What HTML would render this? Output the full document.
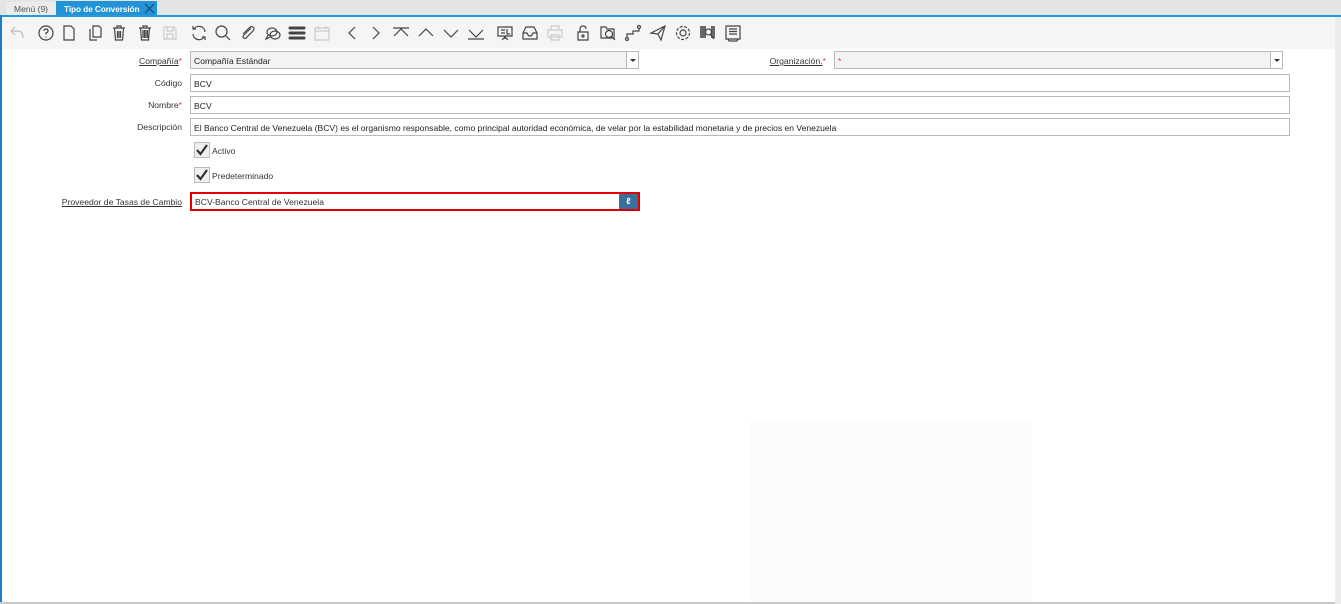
<!DOCTYPE html>
<html><head><meta charset="utf-8"><style>
*{margin:0;padding:0;box-sizing:border-box}
body{width:1341px;height:604px;background:#fff;font-family:"Liberation Sans",sans-serif;position:relative;overflow:hidden;color:#333}
.abs{position:absolute}
.tabbar{left:0;top:0;width:1341px;height:16px;background:#e4e4e4}
.tab1{left:6px;top:2px;width:50px;height:14px;background:#ececec;font-size:8.5px;color:#555;padding:2px 0 0 8px}
.tab2{left:56px;top:1px;width:101px;height:15px;background:#2193d6;color:#fff;font-size:8.3px;font-weight:bold;padding:3px 0 0 8px;letter-spacing:-0.1px}
.bline{left:0;top:15px;width:1341px;height:2px;background:#2a97d8}
.tb{left:2px;top:17px;width:1333px;height:32px;background:#f5f5f5}
.ledge{left:0;top:15px;width:2px;height:589px;background:#1a7fc7}
.rs{left:1335px;top:17px;width:6px;height:587px;background:#ececec}
.bot{left:0;top:602px;width:1335px;height:2px;background:#c8c8c8}
.lbl{font-size:8.6px;text-align:right;width:180px;left:2px;color:#333}
.req{color:#d33}
.fld{border:1px solid #b9b9b9;height:18px;font-size:8.6px;padding:4px 0 0 3px;background:#fff;color:#222;white-space:nowrap}
.grey{background:#f3f3f3}
.dd{position:absolute;right:0;top:0;width:12px;height:16px;border-left:1px solid #b9b9b9;background:#fff}
.dd:after{content:"";position:absolute;left:3px;top:7px;border-left:3px solid transparent;border-right:3px solid transparent;border-top:3px solid #333}
.cb{width:16px;height:16px;border:1px solid #bbb;background:#f0f0f0}
svg.i{position:absolute;top:24px;width:18px;height:18px;fill:none;stroke:#444;stroke-width:1.2}
</style></head><body>
<div class="abs tabbar"></div>
<div class="abs tab1">Menú (9)</div>
<div class="abs tab2">Tipo de Conversión</div>
<svg class="abs" style="left:144px;top:3px" width="11" height="11"><path d="M1 1L10 10M10 1L1 10" stroke="#1a4a6a" stroke-width="1.2"/></svg>
<div class="abs bline"></div>
<div class="abs tb"></div>
<div class="abs ledge"></div>
<div class="abs rs"></div>
<div class="abs bot"></div>

<svg class="i" style="left:8px" viewBox="0 0 18 18"><path d="M3 7L7 3M3 7L7 11M3 7H10Q15 7 15 14" stroke="#bbb"/></svg>
<svg class="i" style="left:37px" viewBox="0 0 18 18"><circle cx="9" cy="9" r="7"/><path d="M7 7Q7 5 9 5Q11 5 11 7Q11 8.5 9 9V10.5M9 12.5V13.5"/></svg>
<svg class="i" style="left:60px" viewBox="0 0 18 18"><path d="M4 2H11L14 5V16H4Z"/></svg>
<svg class="i" style="left:86px" viewBox="0 0 18 18"><path d="M7 2H13L15 4V13H7ZM4 5V16H11"/></svg>
<svg class="i" style="left:110px" viewBox="0 0 18 18"><path d="M3 4H15M7 4V2H11V4M4.5 4L5.5 16H12.5L13.5 4M7.5 7V14M9 7V14M10.5 7V14"/></svg>
<svg class="i" style="left:136px" viewBox="0 0 18 18"><path d="M3 4H15M7 4V2H11V4M4.5 4L5.5 16H12.5L13.5 4M7 6V14M8.5 6V14M10 6V14M11.5 6V14"/></svg>
<svg class="i" style="left:161px" viewBox="0 0 18 18"><path d="M3 3H13L15 5V15H3ZM6 3V7H12V3M6 15V10H12V15" stroke="#ccc"/></svg>
<svg class="i" style="left:190px" viewBox="0 0 18 18"><path d="M15 8A6 6 0 0 0 4 5M3 2V5H6M3 10A6 6 0 0 0 14 13M15 16V13H12"/></svg>
<svg class="i" style="left:214px" viewBox="0 0 18 18"><circle cx="7.5" cy="7.5" r="5.5"/><path d="M11.5 11.5L16 16"/></svg>
<svg class="i" style="left:239px" viewBox="0 0 18 18"><path d="M12 4L5 11Q3 13 5 14Q7 15 8 13L14 7Q16 4 14 3Q12 2 10 4L4 10"/></svg>
<svg class="i" style="left:264px" viewBox="0 0 18 18"><ellipse cx="8" cy="8" rx="5" ry="4"/><ellipse cx="11" cy="11" rx="5" ry="4"/><path d="M4 11L2 15L6 13"/></svg>
<svg class="i" style="left:288px" viewBox="0 0 18 18"><path d="M2 4H16M2 9H16M2 14H16" stroke-width="3" stroke-linecap="round"/></svg>
<svg class="i" style="left:313px" viewBox="0 0 18 18"><path d="M2 4H16V16H2ZM2 7H16M5 2V5M13 2V5" stroke="#ccc"/></svg>
<svg class="i" style="left:343px" viewBox="0 0 18 18"><path d="M12 3L6 9L12 15"/></svg>
<svg class="i" style="left:367px" viewBox="0 0 18 18"><path d="M6 3L12 9L6 15"/></svg>
<svg class="i" style="left:392px" viewBox="0 0 18 18"><path d="M1 4H17M2 12L9 5L16 12"/></svg>
<svg class="i" style="left:417px" viewBox="0 0 18 18"><path d="M2 12L9 5L16 12"/></svg>
<svg class="i" style="left:442px" viewBox="0 0 18 18"><path d="M2 6L9 13L16 6"/></svg>
<svg class="i" style="left:467px" viewBox="0 0 18 18"><path d="M2 6L9 13L16 6M1 15H17"/></svg>
<svg class="i" style="left:496px" viewBox="0 0 18 18"><path d="M2 3H16V12H2ZM9 12V15M6 16L9 13L12 16M5 6H9M5 9H9M11 5V10H14"/></svg>
<svg class="i" style="left:521px" viewBox="0 0 18 18"><path d="M2 9L5 3H13L16 9V15H2ZM2 9H6Q7 12 9 12Q11 12 12 9H16"/></svg>
<svg class="i" style="left:546px" viewBox="0 0 18 18"><path d="M5 6V2H13V6M2 6H16V13H2ZM5 11H13V16H5Z" stroke="#ccc"/></svg>
<svg class="i" style="left:574px" viewBox="0 0 18 18"><path d="M4 8H14V16H4ZM6 8V5Q6 2 9 2Q12 2 12 5"/><circle cx="9" cy="12" r="1"/></svg>
<svg class="i" style="left:599px" viewBox="0 0 18 18"><path d="M2 3H7L8 5H15V14H2Z"/><circle cx="10" cy="10" r="3.5"/><path d="M12.5 12.5L16 16"/></svg>
<svg class="i" style="left:624px" viewBox="0 0 18 18"><circle cx="3" cy="15" r="1.5"/><circle cx="15" cy="3" r="1.5"/><path d="M3 13.5V10H9V7H15V4.5"/></svg>
<svg class="i" style="left:649px" viewBox="0 0 18 18"><path d="M2 9L16 2L12 16L9 10ZM9 10L16 2"/></svg>
<svg class="i" style="left:674px" viewBox="0 0 18 18"><circle cx="9" cy="9" r="3"/><circle cx="9" cy="9" r="6.5" stroke-dasharray="3 1.5"/></svg>
<svg class="i" style="left:699px" viewBox="0 0 18 18"><path d="M2 2V14M4 2V14M6 2V14M13 2V14M15 2V14" stroke-width="1.6"/><circle cx="9.5" cy="8" r="3"/><path d="M11.5 10.5L15 15"/></svg>
<svg class="i" style="left:724px" viewBox="0 0 18 18"><path d="M2 2H16V15H2ZM5 5H13M5 7.5H13M5 10H13M4 15L5 17H13L14 15"/></svg>

<div class="abs lbl" style="top:56px"><u>Compañía</u><span class="req">*</span></div>
<div class="abs fld grey" style="left:190px;top:51px;width:449px">Compañía Estándar<span class="dd"></span></div>
<div class="abs" style="left:700px;top:56px;width:126px;text-align:right;font-size:8.6px"><u>Organización.</u><span class="req">*</span></div>
<div class="abs fld grey" style="left:834px;top:51px;width:449px"><span class="req">*</span><span class="dd"></span></div>

<div class="abs lbl" style="top:78px">Código</div>
<div class="abs fld" style="left:190px;top:74px;width:1100px">BCV</div>
<div class="abs lbl" style="top:100px">Nombre<span class="req">*</span></div>
<div class="abs fld" style="left:190px;top:96px;width:1100px">BCV</div>
<div class="abs lbl" style="top:122px">Descripción</div>
<div class="abs fld" style="left:190px;top:118px;width:1100px;font-size:8.55px">El Banco Central de Venezuela (BCV) es el organismo responsable, como principal autoridad económica, de velar por la estabilidad monetaria y de precios en Venezuela</div>

<div class="abs cb" style="left:194px;top:142px"></div>
<svg class="abs" style="left:195px;top:143px" width="14" height="14"><path d="M2 7L5.5 11L12 2" stroke="#333" stroke-width="2.2" fill="none"/></svg>
<div class="abs" style="left:212px;top:146px;font-size:8.6px">Activo</div>
<div class="abs cb" style="left:194px;top:167px"></div>
<svg class="abs" style="left:195px;top:168px" width="14" height="14"><path d="M2 7L5.5 11L12 2" stroke="#333" stroke-width="2.2" fill="none"/></svg>
<div class="abs" style="left:212px;top:171px;font-size:8.6px">Predeterminado</div>

<div class="abs lbl" style="top:197px"><u>Proveedor de Tasas de Cambio</u></div>
<div class="abs" style="left:190px;top:192px;width:450px;height:19px;border:2px solid #e00000;background:#fff;font-size:8.6px;padding:3px 0 0 3px">BCV-Banco Central de Venezuela</div>
<div class="abs" style="left:619px;top:194px;width:19px;height:15px;background:#3a6e9c;color:#fff;font-size:9px;font-weight:bold;text-align:center;line-height:15px">ℓ</div>

<div class="abs" style="left:750px;top:420px;width:282px;height:182px;background:#fbfbfb"></div>
</body></html>
